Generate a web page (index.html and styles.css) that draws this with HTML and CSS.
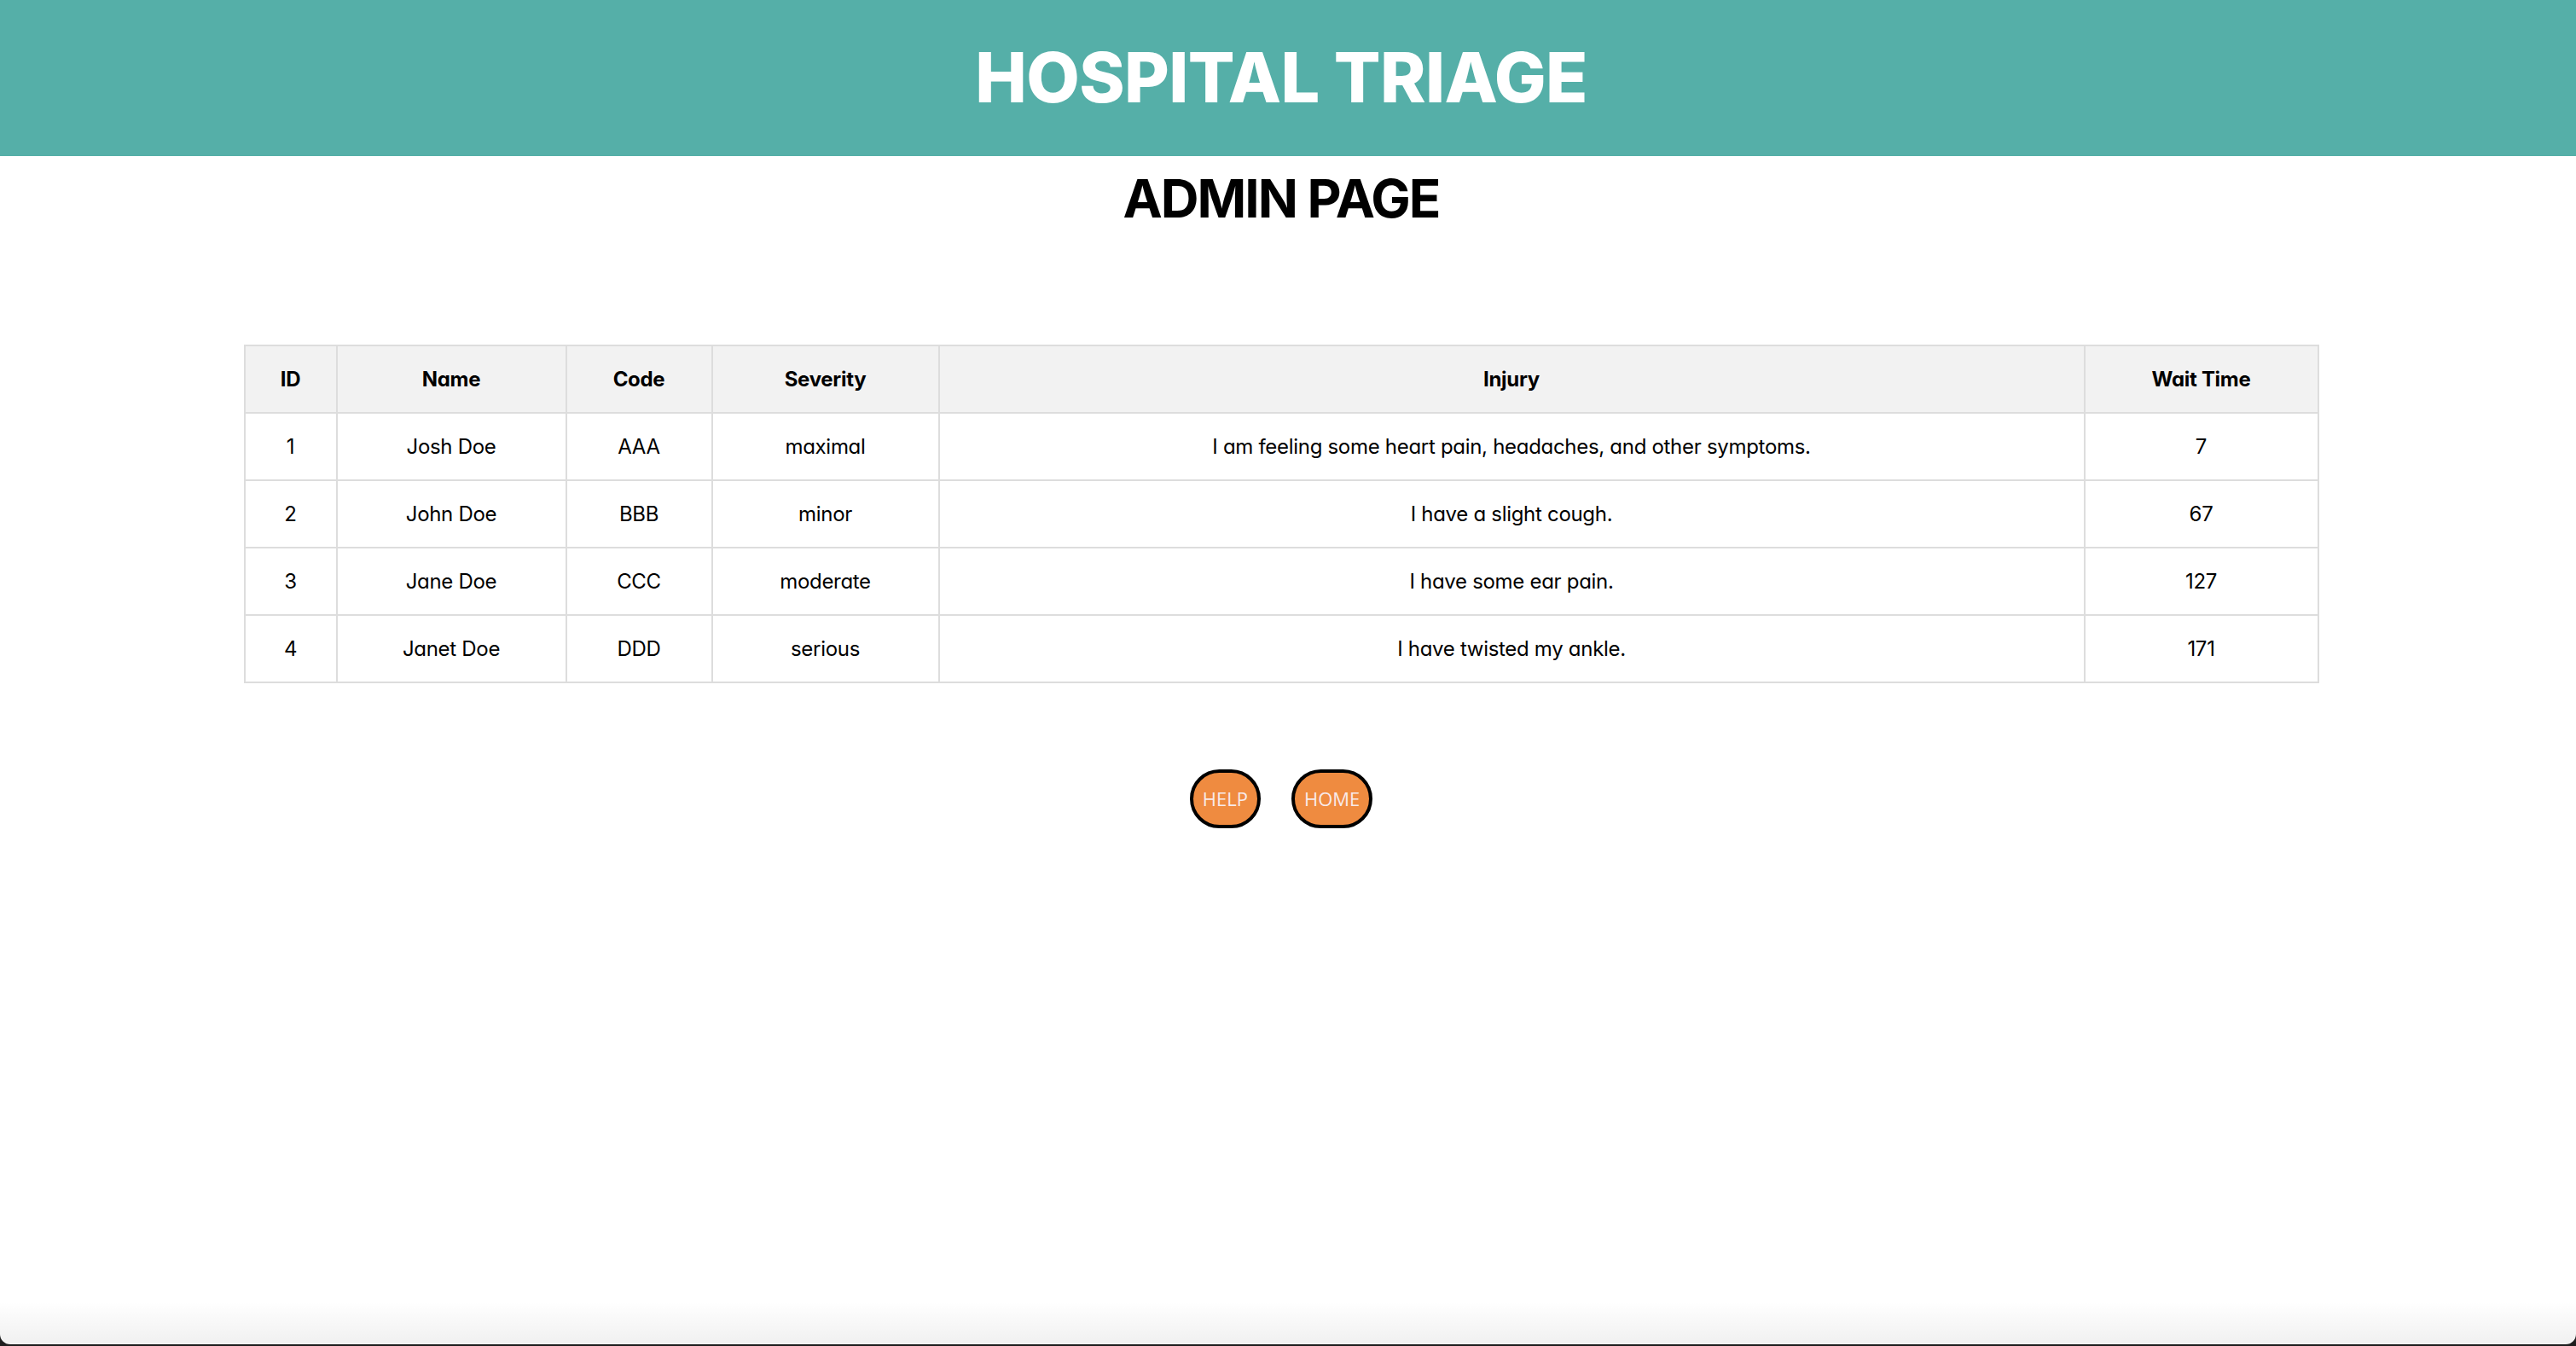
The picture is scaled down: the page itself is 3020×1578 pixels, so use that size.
FILE: index.html
```html
<!DOCTYPE html>
<html lang="en">
<head>
<meta charset="utf-8">
<title>Hospital Triage - Admin</title>
<link rel="stylesheet" href="styles.css">
</head>
<body>
<div class="window">
  <header class="topbar">
    <h1 class="brand">HOSPITAL TRIAGE</h1>
  </header>
  <main class="page">
    <h2 class="page-title">ADMIN PAGE</h2>
    <table class="patients">
      <colgroup>
        <col class="c-id"><col class="c-name"><col class="c-code"><col class="c-sev"><col class="c-injury"><col class="c-wait">
      </colgroup>
      <thead>
        <tr><th>ID</th><th>Name</th><th>Code</th><th>Severity</th><th>Injury</th><th>Wait Time</th></tr>
      </thead>
      <tbody>
        <tr><td>1</td><td>Josh Doe</td><td>AAA</td><td>maximal</td><td>I am feeling some heart pain, headaches, and other symptoms.</td><td>7</td></tr>
        <tr><td>2</td><td>John Doe</td><td>BBB</td><td>minor</td><td>I have a slight cough.</td><td>67</td></tr>
        <tr><td>3</td><td>Jane Doe</td><td>CCC</td><td>moderate</td><td>I have some ear pain.</td><td>127</td></tr>
        <tr><td>4</td><td>Janet Doe</td><td>DDD</td><td>serious</td><td>I have twisted my ankle.</td><td>171</td></tr>
      </tbody>
    </table>
    <div class="actions">
      <button class="pill" type="button">HELP</button>
      <button class="pill" type="button">HOME</button>
    </div>
  </main>
  <div class="frame-shadow"></div>
</div>
</body>
</html>
```
FILE: styles.css
```css
html, body {
  margin: 0;
  padding: 0;
  background: #1e1e1e;
}

.window {
  height: 1576px;
  background: #ffffff;
  border-radius: 0 0 12px 12px;
  overflow: hidden;
  position: relative;
  font-family: "Inter", "Liberation Sans", sans-serif;
  font-feature-settings: "cv11" 1;
  color: #000;
}

.topbar {
  height: 183px;
  background: #55afa8;
  display: flex;
  align-items: center;
  justify-content: center;
  padding-right: 16px;
}

.brand {
  margin: 0;
  color: #ffffff;
  font-family: "Inter", "Liberation Sans", sans-serif;
  font-weight: 800;
  font-size: 81px;
  line-height: 1;
  letter-spacing: -0.6px;
}

.page {
  padding-right: 16px;
  display: flex;
  flex-direction: column;
  align-items: center;
}

.page-title {
  margin: 13px 0 0;
  font-size: 62px;
  line-height: 1.2;
  font-weight: 700;
  letter-spacing: -2px;
}

.patients {
  margin-top: 134px;
  width: 2431px;
  border-collapse: collapse;
  table-layout: fixed;
  font-size: 24px;
}

.c-id { width: 108px; }
.c-name { width: 269px; }
.c-code { width: 171px; }
.c-sev { width: 266px; }
.c-injury { width: 1343px; }
.c-wait { width: 274px; }

.patients th,
.patients td {
  border: 2px solid #dddddd;
  height: 77px;
  padding: 0 8px;
  text-align: center;
  vertical-align: middle;
  letter-spacing: -0.3px;
}

.patients th {
  background: #f2f2f2;
  font-weight: 700;
}

.patients td {
  font-weight: 400;
}

.actions {
  margin-top: 101px;
  display: flex;
  gap: 36px;
}

.pill {
  font-family: "Open Sans", "Liberation Sans", sans-serif;
  font-size: 22px;
  line-height: 29px;
  color: #f8eaea;
  background: #ef8b40;
  border: 4px solid #000;
  border-radius: 40px;
  padding: 16px 11px;
  margin: 0;
}

.frame-shadow {
  position: absolute;
  left: 0;
  right: 0;
  bottom: 0;
  height: 50px;
  background: linear-gradient(to bottom, rgba(0,0,0,0), rgba(0,0,0,0.06));
  border-radius: 0 0 12px 12px;
  pointer-events: none;
}
```
